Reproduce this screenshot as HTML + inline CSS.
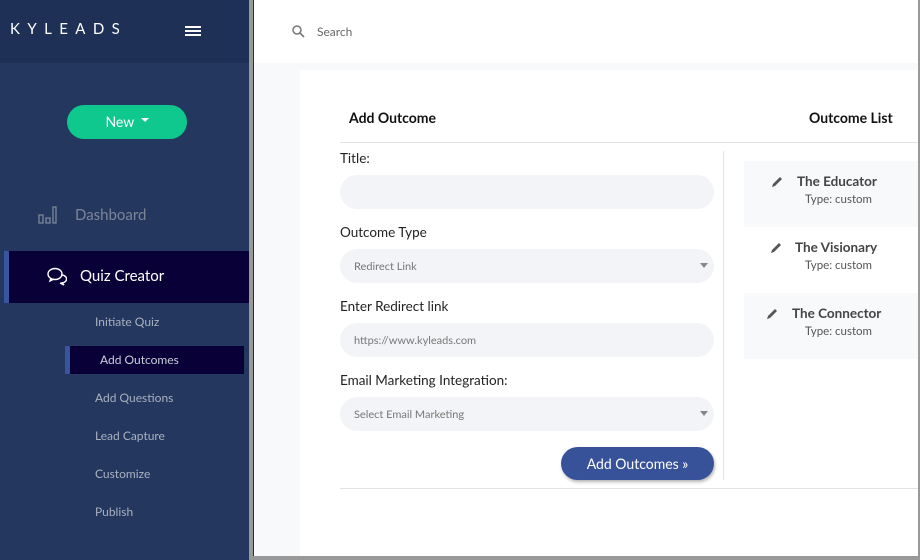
<!DOCTYPE html>
<html><head><meta charset="utf-8"><style>
*{box-sizing:border-box;margin:0;padding:0}
body{width:920px;height:560px;overflow:hidden;background:#999;font-family:"Lato","Liberation Sans",sans-serif;position:relative}
.sb{position:absolute;left:0;top:0;width:249px;height:560px;background:#24375f}
.sbh{position:absolute;left:0;top:0;width:249px;height:63px;background:#1f3057}
.logo{position:absolute;left:10px;top:20px;color:#fff;font-size:15px;letter-spacing:7.4px}
.ham{position:absolute;left:185px;top:26px;width:16px}
.ham i{display:block;height:2px;background:#fff;margin-bottom:2px}
.new{position:absolute;left:67px;top:105px;width:120px;height:34px;border-radius:17px;background:#0fc88d;color:#fff;font-size:14px;text-align:center;line-height:34px}
.dash{position:absolute;left:75px;top:206px;color:#7c8597;font-size:15px}
.qc{position:absolute;left:4px;top:251px;width:245px;height:52px;background:#0a0038;border-left:5px solid #3a55a0}
.qc span{position:absolute;left:71px;top:16px;color:#fff;font-size:15px}
.sub{position:absolute;left:95px;color:#a8b1bf;font-size:12px}
.ao{position:absolute;left:65px;top:346px;width:179px;height:28px;background:#0a0038;border-left:5px solid #3a55a0}
.ao span{position:absolute;left:30px;top:6px;color:#c9cfda;font-size:12px}
.main{position:absolute;left:253px;top:0;width:665px;height:556px;background:#f8f9fb;border-left:1px solid #1c2e50}
.top{position:absolute;left:0;top:0;width:664px;height:63px;background:#fff}
.card{position:absolute;left:46px;top:70px;width:618px;height:486px;background:#fff}
.lbl{position:absolute;color:#222;font-size:14px}
.inp{position:absolute;left:40px;width:374px;height:34px;border-radius:17px;background:#f3f4f7;color:#777;font-size:11px;padding:11px 14px}
.caret{position:absolute;right:6px;top:14px;border:4px solid transparent;border-top:5px solid #888}
.it{position:absolute;left:444px;width:174px;height:66px}
.it b{position:absolute;font-size:13.5px;color:#444;font-weight:bold}
.it small{position:absolute;left:61px;top:32px;font-size:11.5px;color:#555}
</style></head><body>
<div class="sb"></div>
<div class="sbh"></div>
<div class="logo">KYLEADS</div>
<div class="ham"><i></i><i></i><i></i></div>
<div class="new">New <span style="display:inline-block;border:4px solid transparent;border-top:4px solid #fff;vertical-align:1px;margin-left:3px"></span></div>
<svg style="position:absolute;left:38px;top:206px" width="20" height="18"><g fill="none" stroke="#7c8597" stroke-width="1.3"><rect x="1" y="9" width="4" height="8"/><rect x="8" y="12" width="4" height="5"/><rect x="15" y="1" width="3" height="16"/></g></svg>
<div class="dash">Dashboard</div>
<div class="qc"><svg style="position:absolute;left:38px;top:15px" width="20" height="20"><g fill="none" stroke="#fff" stroke-width="1.4"><ellipse cx="8" cy="8" rx="7" ry="5.5"/><path d="M4 12 L3 15 L7 13"/><path d="M14 9 A5 4 0 0 1 15 17 L17 19 L13 17"/></g></svg><span>Quiz Creator</span></div>
<div class="sub" style="top:314px">Initiate Quiz</div>
<div class="ao"><span>Add Outcomes</span></div>
<div class="sub" style="top:390px">Add Questions</div>
<div class="sub" style="top:428px">Lead Capture</div>
<div class="sub" style="top:466px">Customize</div>
<div class="sub" style="top:504px">Publish</div>
<div class="main">
<div class="top"><svg style="position:absolute;left:38px;top:25px" width="13" height="13"><circle cx="5" cy="5" r="4" fill="none" stroke="#777" stroke-width="1.5"/><path d="M8 8 L12 12" stroke="#777" stroke-width="1.6"/></svg><span style="position:absolute;left:63px;top:24px;font-size:12px;color:#666">Search</span></div>
<div class="card">
<div class="lbl" style="left:49px;top:39px;font-weight:bold;color:#111;font-size:14px">Add Outcome</div>
<div class="lbl" style="left:509px;top:39px;font-weight:bold;color:#111;font-size:14px">Outcome List</div>
<div style="position:absolute;left:40px;top:72px;width:578px;height:1px;background:#e3e3e3"></div>
<div style="position:absolute;left:423px;top:81px;width:1px;height:329px;background:#e3e3e3"></div>
<div class="lbl" style="left:40px;top:80px;font-size:13.5px">Title:</div>
<div class="inp" style="top:105px"></div>
<div class="lbl" style="left:40px;top:154px;font-size:13.5px">Outcome Type</div>
<div class="inp" style="top:179px">Redirect Link<span class="caret"></span></div>
<div class="lbl" style="left:40px;top:228px;font-size:13.5px">Enter Redirect link</div>
<div class="inp" style="top:253px">https://www.kyleads.com</div>
<div class="lbl" style="left:40px;top:302px;font-size:13.5px">Email Marketing Integration:</div>
<div class="inp" style="top:327px">Select Email Marketing<span class="caret"></span></div>
<div style="position:absolute;left:261px;top:377px;width:153px;height:33px;border-radius:17px;background:#38529a;color:#fff;font-size:14px;text-align:center;line-height:33px;box-shadow:1px 2px 3px rgba(0,0,0,.3)">Add Outcomes »</div>
<div style="position:absolute;left:40px;top:418px;width:578px;height:1px;background:#e3e3e3"></div>
<div class="it" style="top:91px;background:#f8f9fb"><svg style="position:absolute;left:27px;top:14px" width="13" height="13"><path d="M1 12 L2 9 L9 2 L11 4 L4 11 Z" fill="#555"/></svg><b style="left:53px;top:12px">The Educator</b><small>Type: custom</small></div>
<div class="it" style="top:157px"><svg style="position:absolute;left:26px;top:14px" width="13" height="13"><path d="M1 12 L2 9 L9 2 L11 4 L4 11 Z" fill="#555"/></svg><b style="left:51px;top:12px">The Visionary</b><small>Type: custom</small></div>
<div class="it" style="top:223px;background:#f8f9fb"><svg style="position:absolute;left:22px;top:14px" width="13" height="13"><path d="M1 12 L2 9 L9 2 L11 4 L4 11 Z" fill="#555"/></svg><b style="left:48px;top:12px">The Connector</b><small>Type: custom</small></div>
</div>
</div>
</body></html>
